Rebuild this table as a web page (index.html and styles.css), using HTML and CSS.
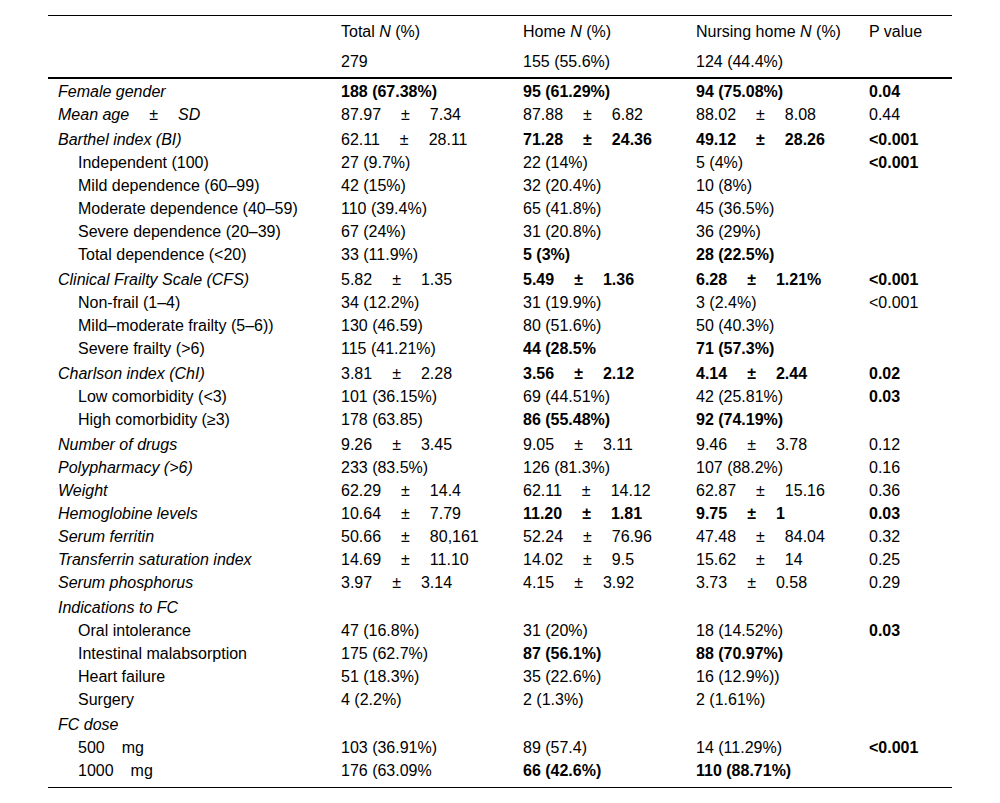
FILE: index.html
```html
<!DOCTYPE html>
<html lang="en">
<head>
<meta charset="utf-8">
<title>Baseline characteristics</title>
<link rel="stylesheet" href="styles.css">
</head>
<body>
<div class="page">
<table class="data">
  <colgroup>
    <col class="c-label">
    <col class="c-total">
    <col class="c-home">
    <col class="c-nh">
    <col class="c-p">
  </colgroup>
  <thead>
    <tr class="h1">
      <th></th>
      <th>Total <i>N</i> (%)</th>
      <th>Home <i>N</i> (%)</th>
      <th>Nursing home <i>N</i> (%)</th>
      <th>P value</th>
    </tr>
    <tr class="h2">
      <th></th>
      <th>279</th>
      <th>155 (55.6%)</th>
      <th>124 (44.4%)</th>
      <th></th>
    </tr>
  </thead>
  <tbody>
    <tr><td class="lab">Female gender</td><td><b>188 (67.38%)</b></td><td><b>95 (61.29%)</b></td><td><b>94 (75.08%)</b></td><td><b>0.04</b></td></tr>
    <tr><td class="lab">Mean age<span class="pm">±</span>SD</td><td>87.97<span class="pm">±</span>7.34</td><td>87.88<span class="pm">±</span>6.82</td><td>88.02<span class="pm">±</span>8.08</td><td>0.44</td></tr>

    <tr class="grp"><td class="lab">Barthel index (BI)</td><td>62.11<span class="pm">±</span>28.11</td><td><b>71.28<span class="pm">±</span>24.36</b></td><td><b>49.12<span class="pm">±</span>28.26</b></td><td><b>&lt;0.001</b></td></tr>
    <tr><td class="sub">Independent (100)</td><td>27 (9.7%)</td><td>22 (14%)</td><td>5 (4%)</td><td><b>&lt;0.001</b></td></tr>
    <tr><td class="sub">Mild dependence (60–99)</td><td>42 (15%)</td><td>32 (20.4%)</td><td>10 (8%)</td><td></td></tr>
    <tr><td class="sub">Moderate dependence (40–59)</td><td>110 (39.4%)</td><td>65 (41.8%)</td><td>45 (36.5%)</td><td></td></tr>
    <tr><td class="sub">Severe dependence (20–39)</td><td>67 (24%)</td><td>31 (20.8%)</td><td>36 (29%)</td><td></td></tr>
    <tr><td class="sub">Total dependence (&lt;20)</td><td>33 (11.9%)</td><td><b>5 (3%)</b></td><td><b>28 (22.5%)</b></td><td></td></tr>

    <tr class="grp"><td class="lab">Clinical Frailty Scale (CFS)</td><td>5.82<span class="pm">±</span>1.35</td><td><b>5.49<span class="pm">±</span>1.36</b></td><td><b>6.28<span class="pm">±</span>1.21%</b></td><td><b>&lt;0.001</b></td></tr>
    <tr><td class="sub">Non-frail (1–4)</td><td>34 (12.2%)</td><td>31 (19.9%)</td><td>3 (2.4%)</td><td>&lt;0.001</td></tr>
    <tr><td class="sub">Mild–moderate frailty (5–6))</td><td>130 (46.59)</td><td>80 (51.6%)</td><td>50 (40.3%)</td><td></td></tr>
    <tr><td class="sub">Severe frailty (&gt;6)</td><td>115 (41.21%)</td><td><b>44 (28.5%</b></td><td><b>71 (57.3%)</b></td><td></td></tr>

    <tr class="grp"><td class="lab">Charlson index (ChI)</td><td>3.81<span class="pm">±</span>2.28</td><td><b>3.56<span class="pm">±</span>2.12</b></td><td><b>4.14<span class="pm">±</span>2.44</b></td><td><b>0.02</b></td></tr>
    <tr><td class="sub">Low comorbidity (&lt;3)</td><td>101 (36.15%)</td><td>69 (44.51%)</td><td>42 (25.81%)</td><td><b>0.03</b></td></tr>
    <tr><td class="sub">High comorbidity (≥3)</td><td>178 (63.85)</td><td><b>86 (55.48%)</b></td><td><b>92 (74.19%)</b></td><td></td></tr>

    <tr class="grp"><td class="lab">Number of drugs</td><td>9.26<span class="pm">±</span>3.45</td><td>9.05<span class="pm">±</span>3.11</td><td>9.46<span class="pm">±</span>3.78</td><td>0.12</td></tr>
    <tr><td class="lab">Polypharmacy (&gt;6)</td><td>233 (83.5%)</td><td>126 (81.3%)</td><td>107 (88.2%)</td><td>0.16</td></tr>
    <tr><td class="lab">Weight</td><td>62.29<span class="pm">±</span>14.4</td><td>62.11<span class="pm">±</span>14.12</td><td>62.87<span class="pm">±</span>15.16</td><td>0.36</td></tr>
    <tr><td class="lab">Hemoglobine levels</td><td>10.64<span class="pm">±</span>7.79</td><td><b>11.20<span class="pm">±</span>1.81</b></td><td><b>9.75<span class="pm">±</span>1</b></td><td><b>0.03</b></td></tr>
    <tr><td class="lab">Serum ferritin</td><td>50.66<span class="pm">±</span>80,161</td><td>52.24<span class="pm">±</span>76.96</td><td>47.48<span class="pm">±</span>84.04</td><td>0.32</td></tr>
    <tr><td class="lab">Transferrin saturation index</td><td>14.69<span class="pm">±</span>11.10</td><td>14.02<span class="pm">±</span>9.5</td><td>15.62<span class="pm">±</span>14</td><td>0.25</td></tr>
    <tr><td class="lab">Serum phosphorus</td><td>3.97<span class="pm">±</span>3.14</td><td>4.15<span class="pm">±</span>3.92</td><td>3.73<span class="pm">±</span>0.58</td><td>0.29</td></tr>

    <tr class="grp"><td class="lab">Indications to FC</td><td></td><td></td><td></td><td></td></tr>
    <tr><td class="sub">Oral intolerance</td><td>47 (16.8%)</td><td>31 (20%)</td><td>18 (14.52%)</td><td><b>0.03</b></td></tr>
    <tr><td class="sub">Intestinal malabsorption</td><td>175 (62.7%)</td><td><b>87 (56.1%)</b></td><td><b>88 (70.97%)</b></td><td></td></tr>
    <tr><td class="sub">Heart failure</td><td>51 (18.3%)</td><td>35 (22.6%)</td><td>16 (12.9%))</td><td></td></tr>
    <tr><td class="sub">Surgery</td><td>4 (2.2%)</td><td>2 (1.3%)</td><td>2 (1.61%)</td><td></td></tr>

    <tr class="grp"><td class="lab">FC dose</td><td></td><td></td><td></td><td></td></tr>
    <tr><td class="sub">500<span class="unit">mg</span></td><td>103 (36.91%)</td><td>89 (57.4)</td><td>14 (11.29%)</td><td><b>&lt;0.001</b></td></tr>
    <tr class="last"><td class="sub">1000<span class="unit">mg</span></td><td>176 (63.09%</td><td><b>66 (42.6%)</b></td><td><b>110 (88.71%)</b></td><td></td></tr>
  </tbody>
</table>
</div>
</body>
</html>
```

FILE: styles.css
```css
html, body {
  margin: 0;
  padding: 0;
  background: #fff;
}

body {
  font-family: "Liberation Sans", Arial, sans-serif;
  font-size: 16px;
  color: #000;
}

.page {
  padding: 15px 48px 0 48px;
}

.data {
  width: 904px;
  border-collapse: collapse;
  table-layout: fixed;
}

.c-label { width: 283px; }
.c-total { width: 182px; }
.c-home  { width: 173px; }
.c-nh    { width: 173px; }
.c-p     { width: 93px; }

.data th,
.data td {
  padding: 0 10px;
  text-align: left;
  vertical-align: top;
  white-space: nowrap;
  font-weight: normal;
}

.data thead tr.h1 th {
  border-top: 1px solid #000;
  height: 31px;
  line-height: 31px;
}

.data thead tr.h2 th {
  height: 30px;
  line-height: 30px;
  border-bottom: 2px solid #000;
}

.data tbody td {
  height: 21px;
  line-height: 21px;
  padding-top: 2px;
}

.data tbody tr.grp td {
  padding-top: 4px;
}

.data tbody tr.last td {
  padding-bottom: 6px;
  border-bottom: 1px solid #000;
}

.data td.lab {
  font-style: italic;
}

.data td.sub {
  padding-left: 30px;
}

.data b {
  font-weight: bold;
}

.pm {
  padding: 0 20px;
}

.unit {
  padding-left: 17px;
}
```
